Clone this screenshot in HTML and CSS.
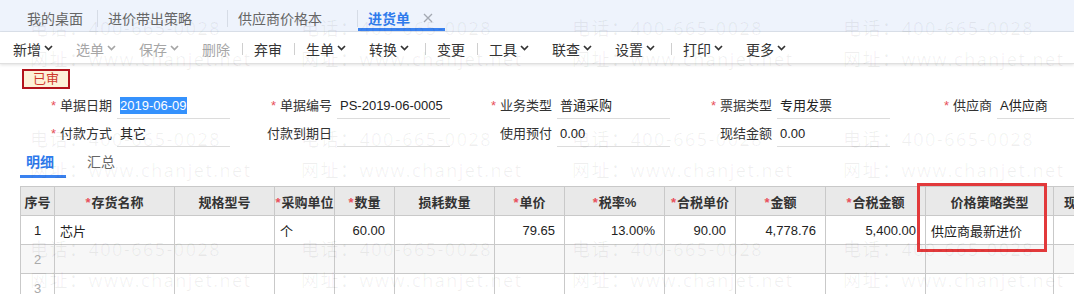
FILE: index.html
```html
<!DOCTYPE html>
<html lang="zh-CN">
<head>
<meta charset="utf-8">
<title>进货单</title>
<link rel="stylesheet" href="styles.css">
</head>
<body>
<div class="tabbar">
  <div class="tab first">我的桌面</div>
  <span class="tsep"></span>
  <div class="tab">进价带出策略<svg class="x" width="10" height="10" viewBox="0 0 10 10"><path d="M1 1L9 9M9 1L1 9"/></svg></div>
  <span class="tsep"></span>
  <div class="tab">供应商价格本<svg class="x" width="10" height="10" viewBox="0 0 10 10"><path d="M1 1L9 9M9 1L1 9"/></svg></div>
  <span class="tsep"></span>
  <div class="tab active">进货单<svg class="x" width="10" height="10" viewBox="0 0 10 10"><path d="M1 1L9 9M9 1L1 9"/></svg></div>
</div>

<div class="toolbar">
  <span class="tb dd">新增<svg width="9" height="6" viewBox="0 0 9 6"><path d="M1 1L4.5 4.5L8 1"/></svg></span>
  <span class="tb dd dis">选单<svg width="9" height="6" viewBox="0 0 9 6"><path d="M1 1L4.5 4.5L8 1"/></svg></span>
  <span class="tb dd dis">保存<svg width="9" height="6" viewBox="0 0 9 6"><path d="M1 1L4.5 4.5L8 1"/></svg></span>
  <span class="tb dis">删除</span>
  <span class="sep"></span>
  <span class="tb">弃审</span>
  <span class="sep"></span>
  <span class="tb dd">生单<svg width="9" height="6" viewBox="0 0 9 6"><path d="M1 1L4.5 4.5L8 1"/></svg></span>
  <span class="tb dd">转换<svg width="9" height="6" viewBox="0 0 9 6"><path d="M1 1L4.5 4.5L8 1"/></svg></span>
  <span class="sep"></span>
  <span class="tb">变更</span>
  <span class="sep"></span>
  <span class="tb dd">工具<svg width="9" height="6" viewBox="0 0 9 6"><path d="M1 1L4.5 4.5L8 1"/></svg></span>
  <span class="tb dd">联查<svg width="9" height="6" viewBox="0 0 9 6"><path d="M1 1L4.5 4.5L8 1"/></svg></span>
  <span class="tb dd">设置<svg width="9" height="6" viewBox="0 0 9 6"><path d="M1 1L4.5 4.5L8 1"/></svg></span>
  <span class="sep"></span>
  <span class="tb dd">打印<svg width="9" height="6" viewBox="0 0 9 6"><path d="M1 1L4.5 4.5L8 1"/></svg></span>
  <span class="tb dd">更多<svg width="9" height="6" viewBox="0 0 9 6"><path d="M1 1L4.5 4.5L8 1"/></svg></span>
</div>

<div class="status">已审</div>

<div class="form">
  <div class="field"><label class="lbl"><i>*</i>单据日期</label><div class="val"><span class="sel">2019-06-09</span></div></div>
  <div class="field"><label class="lbl"><i>*</i>单据编号</label><div class="val">PS-2019-06-0005</div></div>
  <div class="field"><label class="lbl"><i>*</i>业务类型</label><div class="val">普通采购</div></div>
  <div class="field"><label class="lbl"><i>*</i>票据类型</label><div class="val">专用发票</div></div>
  <div class="field"><label class="lbl"><i>*</i>供应商</label><div class="val">A供应商</div></div>
  <div class="field"><label class="lbl"><i>*</i>付款方式</label><div class="val">其它</div></div>
  <div class="field"><label class="lbl">付款到期日</label><div class="val"></div></div>
  <div class="field"><label class="lbl">使用预付</label><div class="val">0.00</div></div>
  <div class="field"><label class="lbl">现结金额</label><div class="val">0.00</div></div>
</div>

<div class="dtabs">
  <span class="dtab on">明细</span>
  <span class="dtab">汇总</span>
</div>

<table class="grid">
  <colgroup>
    <col style="width:34px"><col style="width:120px"><col style="width:100px"><col style="width:60px">
    <col style="width:60px"><col style="width:100px"><col style="width:70px"><col style="width:100px">
    <col style="width:71px"><col style="width:90px"><col style="width:100px"><col style="width:128px">
    <col style="width:60px">
  </colgroup>
  <thead>
    <tr>
      <th>序号</th><th><i>*</i>存货名称</th><th>规格型号</th><th><i>*</i>采购单位</th>
      <th><i>*</i>数量</th><th>损耗数量</th><th><i>*</i>单价</th><th><i>*</i>税率%</th>
      <th><i>*</i>合税单价</th><th><i>*</i>金额</th><th><i>*</i>合税金额</th><th>价格策略类型</th><th>现存量</th>
    </tr>
  </thead>
  <tbody>
    <tr>
      <td class="no">1</td><td>芯片</td><td></td><td>个</td>
      <td class="num">60.00</td><td></td><td class="num">79.65</td><td class="num">13.00%</td>
      <td class="num">90.00</td><td class="num">4,778.76</td><td class="num">5,400.00</td><td>供应商最新进价</td><td></td>
    </tr>
    <tr class="alt">
      <td class="no dim">2</td><td></td><td></td><td></td><td></td><td></td><td></td><td></td><td></td><td></td><td></td><td></td><td></td>
    </tr>
    <tr>
      <td class="no dim">3</td><td></td><td></td><td></td><td></td><td></td><td></td><td></td><td></td><td></td><td></td><td></td><td></td>
    </tr>
  </tbody>
</table>

<div class="mark"></div>

<div class="wm">
  <div class="wc"><div>电话：400-665-0028</div><div>网址：www.chanjet.net</div></div>
  <div class="wc"><div>电话：400-665-0028</div><div>网址：www.chanjet.net</div></div>
  <div class="wc"><div>电话：400-665-0028</div><div>网址：www.chanjet.net</div></div>
  <div class="wc"><div>电话：400-665-0028</div><div>网址：www.chanjet.net</div></div>
  <div class="wc"><div>电话：400-665-0028</div><div>网址：www.chanjet.net</div></div>
  <div class="wc"><div>电话：400-665-0028</div><div>网址：www.chanjet.net</div></div>
  <div class="wc"><div>电话：400-665-0028</div><div>网址：www.chanjet.net</div></div>
  <div class="wc"><div>电话：400-665-0028</div><div>网址：www.chanjet.net</div></div>
  <div class="wc"><div>电话：400-665-0028</div><div>网址：www.chanjet.net</div></div>
  <div class="wc"><div>电话：400-665-0028</div><div>网址：www.chanjet.net</div></div>
  <div class="wc"><div>电话：400-665-0028</div><div>网址：www.chanjet.net</div></div>
  <div class="wc"><div>电话：400-665-0028</div><div>网址：www.chanjet.net</div></div>
</div>
</body>
</html>
```

FILE: styles.css
```css
* { box-sizing: border-box; margin: 0; padding: 0; }
html, body { width: 1074px; height: 294px; overflow: hidden; background: #fff; }
body {
  position: relative;
  font-family: "Liberation Sans", "Noto Sans CJK SC", sans-serif;
  font-size: 13px;
  color: #333;
}

/* top page tabs */
.tabbar {
  height: 32px;
  background: #eef3fc;
  border-bottom: 1px solid #dde3ec;
  display: flex;
  align-items: stretch;
  padding-left: 13px;
}
.tab {
  display: flex;
  align-items: center;
  font-size: 14px;
  color: #666;
  padding: 7px 12px 0 10px;
  border-bottom: 3px solid transparent;
  white-space: nowrap;
}
.tab.first { padding: 7px 14px 0 14px; }
.tab .x { margin-left: 13px; visibility: hidden; stroke: #a4a9b2; stroke-width: 1.3; fill: none; }
.tab.active { color: #2f7bec; font-weight: bold; border-bottom-color: #3a82f0; }
.tab.active .x { visibility: visible; }
.tsep { width: 1px; height: 17px; margin-top: 10px; background: #d6dce6; align-self: flex-start; }

/* toolbar */
.toolbar {
  height: 32px;
  display: flex;
  align-items: center;
  padding: 2px 0 0 2px;
  border-bottom: 1px solid #e0e0e0;
  box-shadow: 0 1px 3px rgba(0, 0, 0, 0.12);
  font-size: 14px;
  white-space: nowrap;
}
.tb { display: flex; align-items: center; padding: 0 8px 0 11px; color: #333; }
.tb.dd { padding-right: 12px; }
.tb.dis { color: #a6a6a6; }
.tb svg { margin-left: 3px; margin-top: -1px; fill: none; stroke: currentColor; stroke-width: 1.7; }
.sep { width: 1px; height: 12px; background: #cfcfcf; margin-left: 4px; }

/* status */
.status {
  margin: 5px 0 0 22px;
  width: 48px;
  height: 20px;
  border: 2px solid #b3141c;
  background: #fdf2d8;
  color: #cf3a2e;
  font-size: 13px;
  line-height: 16px;
  text-align: center;
}

/* header form */
.form {
  margin-top: 5px;
  padding-left: 12px;
  display: grid;
  grid-template-columns: repeat(5, 218px);
  grid-auto-rows: 28px;
  column-gap: 2px;
}
.field { display: flex; align-items: flex-start; }
.lbl { width: 100px; text-align: right; line-height: 24px; color: #333; white-space: nowrap; }
.lbl i, th i { font-style: normal; color: #e8505b; margin-right: 4px; }
.val {
  width: 113px;
  margin-left: 5px;
  height: 25px;
  line-height: 24px;
  padding-left: 3px;
  border-bottom: 1px solid #dcdcdc;
  white-space: nowrap;
  overflow: visible;
  color: #222;
}
.sel { background: #3592fd; color: #fff; padding: 1px 0; }

/* detail tabs */
.dtabs { display: flex; height: 28px; margin-top: 0; padding-left: 20px; }
.dtab { font-size: 14px; color: #666; line-height: 25px; padding: 0 12px 0 6px; border-bottom: 3px solid transparent; }
.dtab + .dtab { margin-left: 15px; }
.dtab.on { color: #2f7bec; font-weight: bold; border-bottom-color: #3a82f0; }

/* grid */
.grid {
  margin: 8px 0 0 20px;
  border-collapse: collapse;
  table-layout: fixed;
  width: 1093px;
}
.grid th, .grid td { border: 1px solid #c9c9c9; white-space: nowrap; overflow: hidden; }
.grid th {
  height: 29px;
  background: #e9e9e9;
  font-weight: bold;
  color: #333;
  text-align: center;
  font-size: 13px;
}
.grid th i { margin-right: 1px; }
.grid td { height: 29px; padding: 0 5px; color: #222; background: #fff; }
.grid tr.alt td { background: #f7f7f7; }
.grid td.no { text-align: center; padding: 0; }
.grid td.dim { color: #aaa; }
.grid td.num { text-align: right; padding-right: 9px; }

/* annotation box */
.mark {
  position: absolute;
  left: 917px;
  top: 183px;
  width: 130px;
  height: 69px;
  border: 3px solid #e2393b;
  pointer-events: none;
}

/* watermark overlay */
.wm {
  position: absolute;
  left: 30px;
  top: 13px;
  display: grid;
  grid-template-columns: repeat(4, 271px);
  grid-auto-rows: 110.5px;
  pointer-events: none;
  font-family: "Open Sans", "Noto Sans CJK SC", sans-serif;
  font-size: 18px;
  letter-spacing: 1.5px;
  color: rgba(0, 0, 0, 0.06);
}
.wc div { line-height: 31px; white-space: nowrap; }
```
